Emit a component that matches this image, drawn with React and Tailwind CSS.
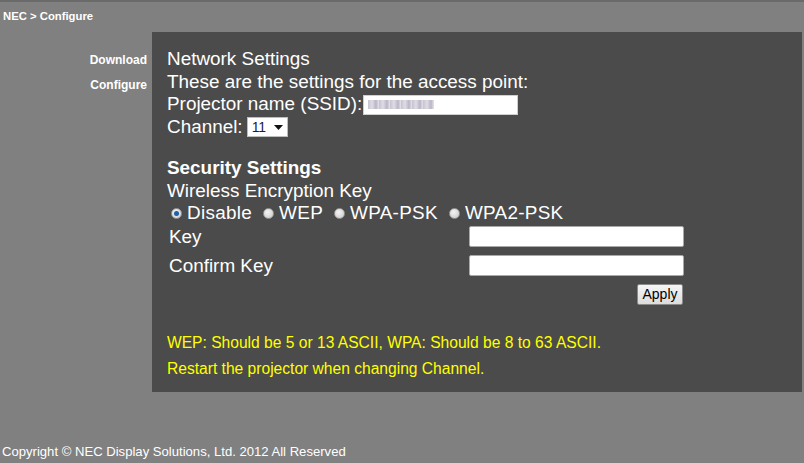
import React from 'react';

const font = { fontFamily: '"Liberation Sans", Arial, sans-serif' };

function Radio({ checked, label }) {
  return (
    <label className="flex items-center">
      <span className="w-[11px] h-[11px] rounded-full border border-[#9a9a9a] bg-[radial-gradient(circle_at_40%_35%,#f4f4f4,#c8c8c8)] flex items-center justify-center mr-[5px]">
        {checked && <span className="w-[5px] h-[5px] rounded-full bg-[#1d5fa8]" />}
      </span>
      <span>{label}</span>
    </label>
  );
}

export default function App() {
  return (
    <div className="w-[804px] h-[463px] bg-[#808080] text-white flex flex-col border-t-2 border-[#6a6a6a] overflow-hidden" style={font}>
      {/* Breadcrumb */}
      <div className="h-[30px] pl-[3px] pt-[7px] text-[11.3px] font-bold leading-[14px]">NEC &gt; Configure</div>

      <div className="flex">
        {/* Side menu */}
        <nav className="w-[152px] pr-[5px] pt-[21px] flex flex-col items-end gap-[11px] text-[12px] font-bold leading-[14px]">
          <a>Download</a>
          <a>Configure</a>
        </nav>

        {/* Panel */}
        <div className="w-[650px] h-[360px] bg-[#4b4b4b] pl-[15px] pt-[16px] text-[18.9px] leading-[22.7px]">
          <div>Network Settings</div>
          <div>These are the settings for the access point:</div>
          <div className="flex items-center">
            <span>Projector name (SSID):</span>
            <span className="w-[155px] h-[20px] bg-white border border-[#cfcfcf] ml-[1px] flex items-center px-[4px]">
              <span className="w-[66px] h-[9px] bg-[repeating-linear-gradient(90deg,#b9b3c4_0px,#d8d4de_4px,#a9a2b8_8px,#e2dde6_11px)] opacity-80" />
            </span>
          </div>
          <div className="flex items-center">
            <span>Channel:</span>
            <span className="ml-[4px] w-[41px] h-[20px] bg-white border border-[#bdbdbd] flex items-center justify-between pl-[4px] pr-[4px] text-[#1b1b4a] text-[14px] leading-[16px]">
              <span>11</span>
              <svg width="9" height="5" viewBox="0 0 9 5"><path d="M0 0h9L4.5 5z" fill="#111" /></svg>
            </span>
          </div>

          <div className="mt-[18px] font-bold">Security Settings</div>
          <div>Wireless Encryption Key</div>
          <div className="flex items-center gap-[11px] pl-[4px] tracking-[0.3px]">
            <Radio checked label="Disable" />
            <Radio label="WEP" />
            <Radio label="WPA-PSK" />
            <Radio label="WPA2-PSK" />
          </div>

          <div className="mt-[1px] flex flex-col gap-[8px] pl-[2px] w-[517px] leading-[21px]">
            <div className="flex items-center justify-between">
              <span>Key</span>
              <span className="w-[215px] h-[21px] bg-white border border-[#a9a9a9] rounded-[2px]" />
            </div>
            <div className="flex items-center justify-between">
              <span>Confirm Key</span>
              <span className="w-[215px] h-[21px] bg-white border border-[#a9a9a9] rounded-[2px]" />
            </div>
            <div className="flex justify-end pr-[1px]">
              <button className="w-[46px] h-[21px] rounded-[2px] border border-[#8a8a8a] bg-[linear-gradient(#f6f6f6,#dcdcdc)] text-black text-[14px] leading-[16px]">Apply</button>
            </div>
          </div>

          <div className="mt-[25px] text-[#ffff00] text-[15.6px] leading-[26px]">
            <div>WEP: Should be 5 or 13 ASCII, WPA: Should be 8 to 63 ASCII.</div>
            <div>Restart the projector when changing Channel.</div>
          </div>
        </div>
      </div>

      {/* Footer */}
      <div className="mt-auto pl-[2px] pb-[3px] text-[13.1px] leading-[16px]">Copyright © NEC Display Solutions, Ltd. 2012 All Reserved</div>
    </div>
  );
}
